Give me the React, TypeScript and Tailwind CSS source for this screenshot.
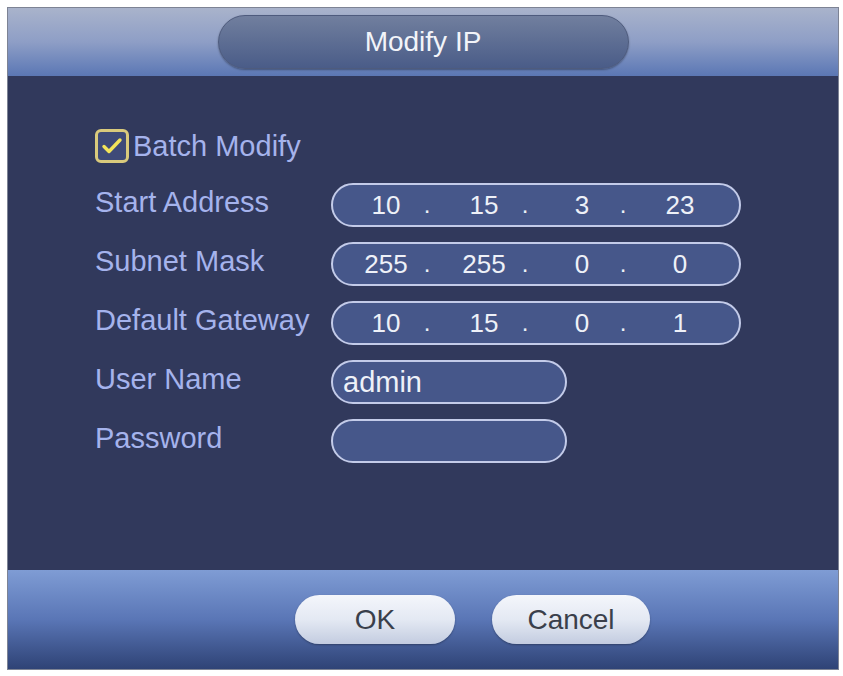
const ipRows = [
  { label: 'Start Address', parts: ['10', '15', '3', '23'] },
  { label: 'Subnet Mask', parts: ['255', '255', '0', '0'] },
  { label: 'Default Gateway', parts: ['10', '15', '0', '1'] },
];

function Label({ children }: { children: string }) {
  return (
    <span className="w-[236px] shrink-0 pb-[6px] text-[29px] leading-none text-[#a5b3ec]">{children}</span>
  );
}

function IpBox({ parts }: { parts: string[] }) {
  return (
    <div className="flex h-11 w-[410px] items-center rounded-full border-2 border-[#c3cbe9] bg-[#46578a] pl-[16px] text-[26px] leading-none text-[#eef1f8]">
      {parts.map((p, i) => (
        <div key={i} className="flex items-center">
          <span className="w-[74px] text-center">{p}</span>
          {i < parts.length - 1 && <span className="mr-[16px] w-[8px] text-center text-[24px]">.</span>}
        </div>
      ))}
    </div>
  );
}

export default function App() {
  return (
    <div className="h-[676px] w-[843px] bg-white pl-[7px] pt-[7px] font-['Liberation_Sans',Arial,sans-serif]">
      <div className="flex h-[663px] w-[832px] flex-col border border-[#7d8394]">
        {/* header */}
        <div className="flex h-[68px] items-center justify-center bg-linear-to-b from-[#a9b3cb] via-[#8e9ec6] to-[#5b77b4]">
          <div className="flex h-[54px] w-[411px] items-center justify-center rounded-full border border-[#4e5b7d] bg-linear-to-b from-[#717f9e] to-[#4a5c88] shadow-[0_1px_2px_rgba(0,0,0,0.35)]">
            <span className="text-[28px] leading-none text-[#f2f4f9]">Modify IP</span>
          </div>
        </div>

        {/* body */}
        <div className="flex flex-1 flex-col bg-[#31395c] pl-[87px] pt-[53px]">
          <div className="flex items-center gap-[4px]">
            <div className="flex h-[34px] w-[34px] items-center justify-center rounded-[6px] border-[3px] border-[#d9ca7c] bg-[#3e4a78]">
              <svg viewBox="0 0 24 24" className="h-[24px] w-[24px]" fill="none" stroke="#f3e45a" strokeWidth="3.4" strokeLinecap="round" strokeLinejoin="round">
                <path d="M4 12.5l5 5L20 6" />
              </svg>
            </div>
            <span className="text-[29px] leading-none text-[#a5b3ec]">Batch Modify</span>
          </div>

          <div className="mt-[20px] flex flex-col gap-[15px]">
            {ipRows.map((r) => (
              <div key={r.label} className="flex items-center">
                <Label>{r.label}</Label>
                <IpBox parts={r.parts} />
              </div>
            ))}
            <div className="flex items-center">
              <Label>User Name</Label>
              <div className="flex h-11 w-[236px] items-center rounded-full border-2 border-[#c3cbe9] bg-[#46578a] pl-[10px] text-[29px] leading-none text-[#eef1f8]">
                admin
              </div>
            </div>
            <div className="flex items-center">
              <Label>Password</Label>
              <div className="h-11 w-[236px] rounded-full border-2 border-[#c3cbe9] bg-[#46578a]" />
            </div>
          </div>
        </div>

        {/* footer */}
        <div className="flex h-[99px] items-center gap-[37px] bg-linear-to-b from-[#7f9cd4] via-[#5a76b6] to-[#2f4376] pl-[287px]">
          <button className="flex h-[49px] w-[160px] items-center justify-center rounded-full bg-linear-to-b from-[#f4f6fb] via-[#e4e9f3] to-[#c3cce0] text-[28px] leading-none text-[#3a3f4b] shadow-[0_1px_2px_rgba(0,0,0,0.3)]">
            OK
          </button>
          <button className="flex h-[49px] w-[158px] items-center justify-center rounded-full bg-linear-to-b from-[#f4f6fb] via-[#e4e9f3] to-[#c3cce0] text-[28px] leading-none text-[#3a3f4b] shadow-[0_1px_2px_rgba(0,0,0,0.3)]">
            Cancel
          </button>
        </div>
      </div>
    </div>
  );
}
